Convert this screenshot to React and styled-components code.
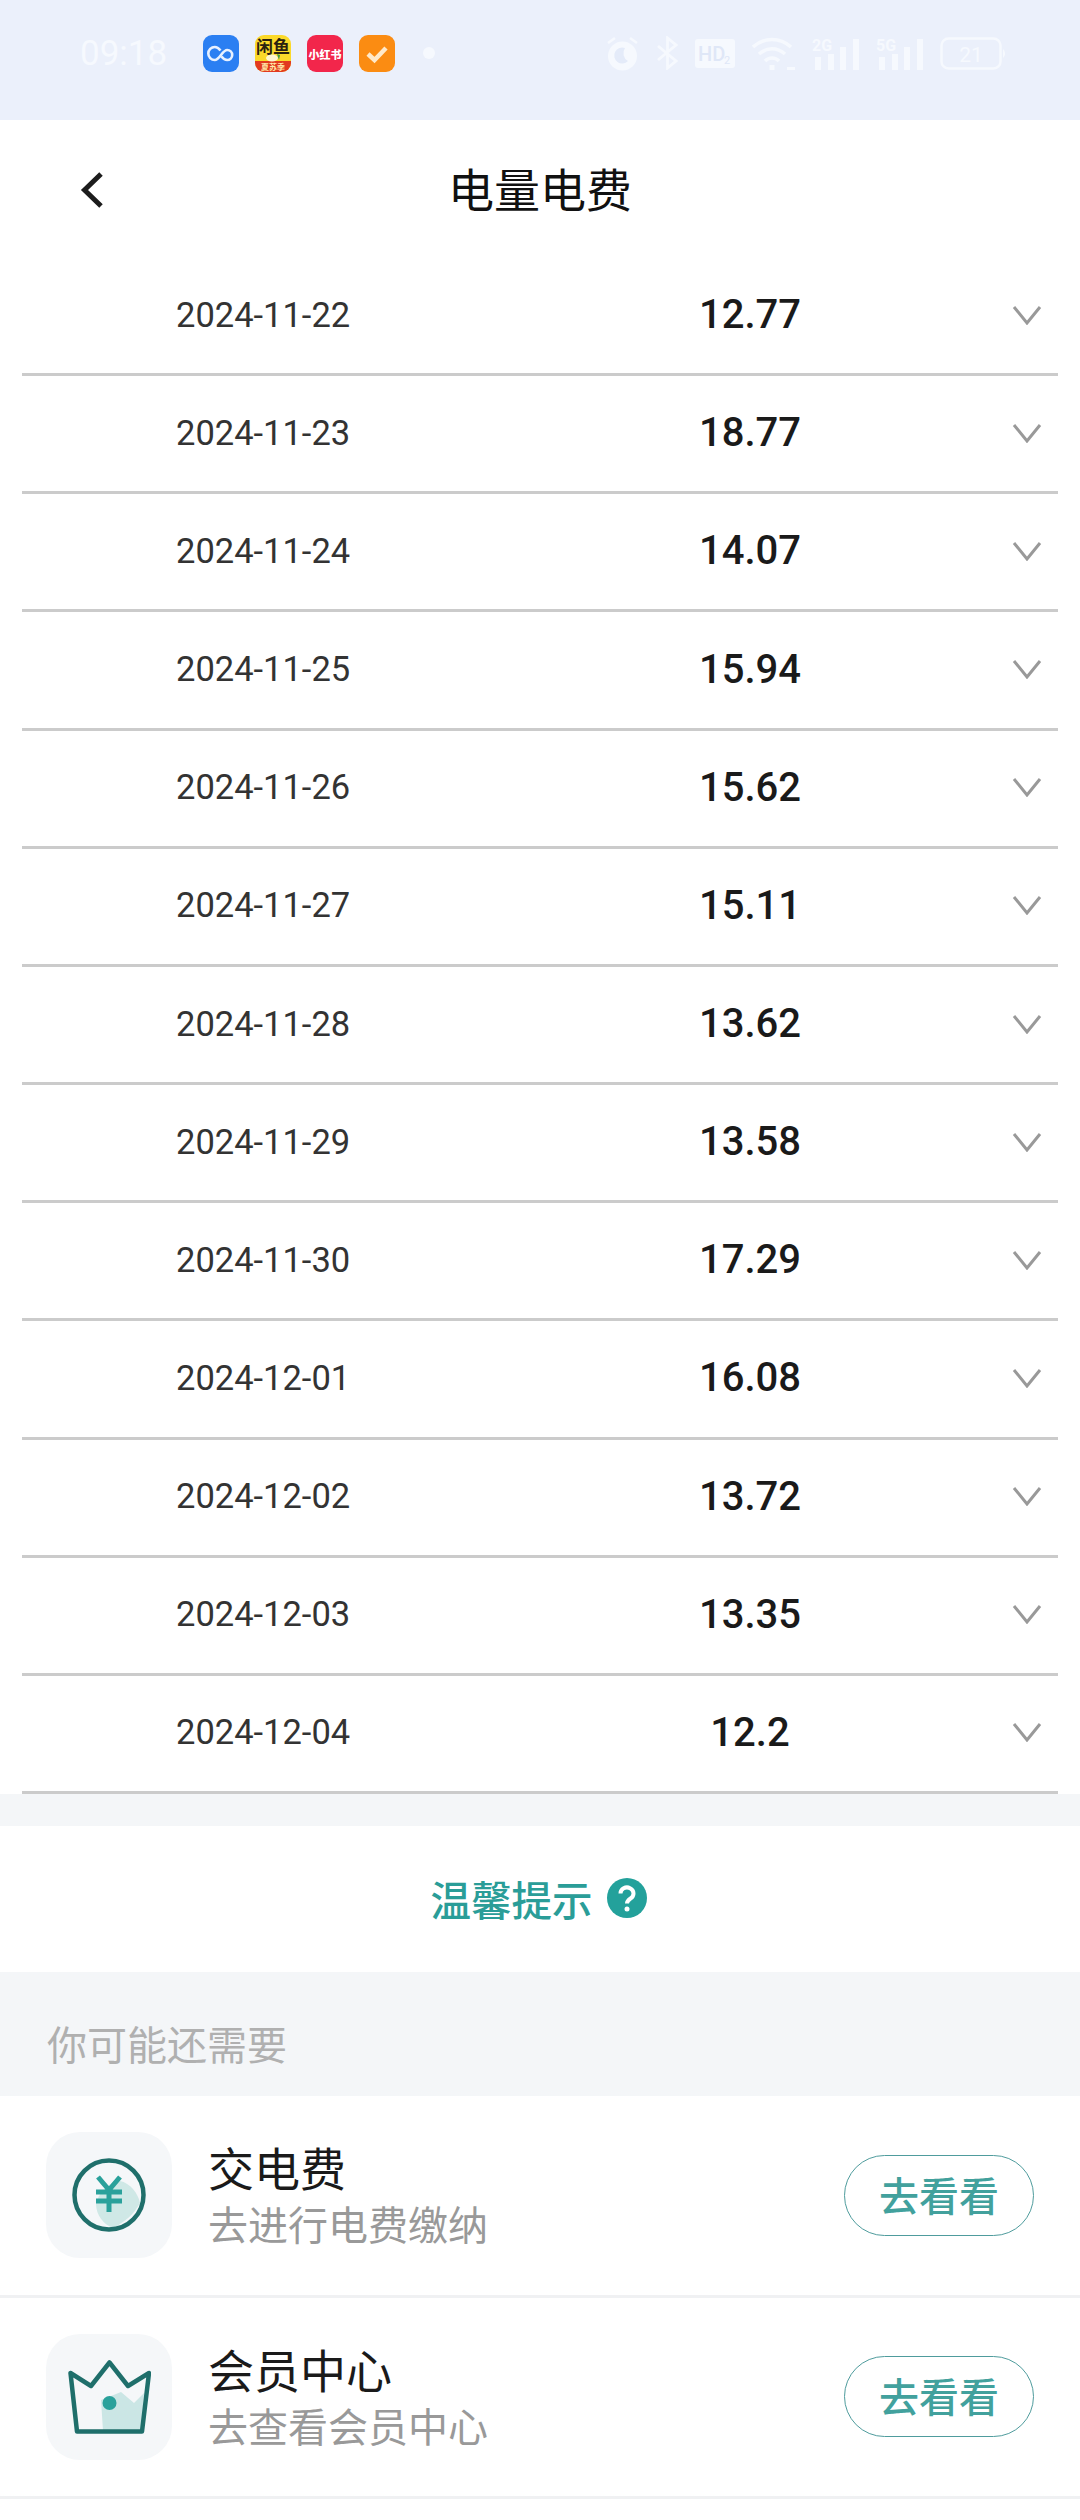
import styled, { createGlobalStyle } from 'styled-components'

const GlobalStyle = createGlobalStyle`
  html, body {
    margin: 0;
    padding: 0;
    background: #fff;
  }
  * {
    box-sizing: border-box;
  }
`

const records = [
  ['2024-11-22', '12.77'],
  ['2024-11-23', '18.77'],
  ['2024-11-24', '14.07'],
  ['2024-11-25', '15.94'],
  ['2024-11-26', '15.62'],
  ['2024-11-27', '15.11'],
  ['2024-11-28', '13.62'],
  ['2024-11-29', '13.58'],
  ['2024-11-30', '17.29'],
  ['2024-12-01', '16.08'],
  ['2024-12-02', '13.72'],
  ['2024-12-03', '13.35'],
  ['2024-12-04', '12.2'],
]

const BAR = '#f6f9fe'

const BlueApp = () => (
  <svg width="36" height="37" viewBox="0 0 36 37">
    <rect width="36" height="37" rx="9" fill="#2b7ff2" />
    <path
      d="M17.500 15.500c-1.800-2.300-3.600-3.500-5.700-3.500a6.500 6.500 0 0 0 0 13c4.800 0 7.600-10 12.400-10a5 5 0 0 1 0 10c-2.200 0-4-1.200-5.700-3.500"
      fill="none"
      stroke="#e8f1ff"
      strokeWidth="2.600"
    />
  </svg>
)

const FishApp = () => (
  <svg width="36" height="37" viewBox="0 0 36 37">
    <defs>
      <clipPath id="fishClip">
        <rect width="36" height="37" rx="9" />
      </clipPath>
    </defs>
    <g clipPath="url(#fishClip)">
      <rect width="36" height="37" fill="#fbd92a" />
      <rect y="26" width="36" height="11" fill="#e2391f" />
      <text x="18" y="18" textAnchor="middle" fontSize="17" fontWeight="700" fill="#2b2110" fontFamily="'Noto Sans CJK SC', sans-serif">闲鱼</text>
      <ellipse cx="17" cy="23" rx="6" ry="3.500" fill="#fff6cf" />
      <path d="M22 19l3 1-1 5z" fill="#3f9a45" />
      <text x="18" y="35" textAnchor="middle" fontSize="8" fontWeight="700" fill="#ffe9a8" fontFamily="'Noto Sans CJK SC', sans-serif">夏苏季</text>
    </g>
  </svg>
)

const RedApp = () => (
  <svg width="36" height="37" viewBox="0 0 36 37">
    <rect width="36" height="37" rx="9" fill="#f2264b" />
    <text x="18" y="23.500" textAnchor="middle" fontSize="11" fontWeight="900" fill="#fff" fontFamily="'Noto Sans CJK SC', sans-serif">小红书</text>
  </svg>
)

const CheckApp = () => (
  <svg width="36" height="37" viewBox="0 0 36 37">
    <rect width="36" height="37" rx="9" fill="#fb8c12" />
    <path d="M9 19l6.500 6L27 13" fill="none" stroke="#ffe9c9" strokeWidth="4.500" />
  </svg>
)

const AlarmIcon = () => (
  <svg width="33" height="35" viewBox="0 0 33 35" fill={BAR}>
    <circle cx="16.500" cy="20" r="14.500" />
    <path d="M2 7l7-5M31 7l-7-5" stroke={BAR} strokeWidth="2.500" />
    <path d="M19 12a8 8 0 1 0 3 13 9 9 0 0 1-3-13z" fill="#e4ebf9" />
  </svg>
)

const BluetoothIcon = () => (
  <svg width="22" height="34" viewBox="0 0 22 34" fill="none" stroke={BAR} strokeWidth="2.800">
    <path d="M2 10l18 15-8.500 7V2L20 9 2 24" />
  </svg>
)

const HdIcon = () => (
  <svg width="40" height="29" viewBox="0 0 40 29">
    <rect width="40" height="29" rx="3" fill={BAR} />
    <text x="3" y="22" fontSize="20" fontWeight="500" fill="#dfe7f7" fontFamily="Roboto, sans-serif">HD</text>
    <text x="29" y="25" fontSize="11" fill="#dfe7f7" fontFamily="Roboto, sans-serif">2</text>
  </svg>
)

const WifiIcon = () => (
  <svg width="43" height="33" viewBox="0 0 43 33" fill="none" stroke={BAR} strokeWidth="3.600">
    <path d="M1 10c11-10 27-10 38 0" />
    <path d="M7 17c8-7 18-7 26 0" />
    <path d="M13 24c4-4 10-4 14 0" />
    <rect x="17.500" y="28" width="5" height="5" fill={BAR} stroke="none" />
    <rect x="35" y="30" width="8" height="3" fill={BAR} stroke="none" />
  </svg>
)

const SignalIcon = ({ label }) => (
  <svg width="47" height="33" viewBox="0 0 47 33" fill={BAR}>
    <text x="0" y="14" fontSize="16" fontWeight="700" fontFamily="Roboto, sans-serif">{label}</text>
    <rect x="3" y="20" width="6" height="13" />
    <rect x="16" y="17" width="6" height="16" />
    <rect x="28" y="10" width="6" height="23" />
    <rect x="41" y="2" width="6" height="31" />
  </svg>
)

const BatteryIcon = () => (
  <svg width="65" height="33" viewBox="0 0 65 33">
    <rect x="1.500" y="1.500" width="59" height="30" rx="7" fill="none" stroke={BAR} strokeWidth="2.500" />
    <path d="M63 12a6 6 0 0 1 0 9z" fill={BAR} />
    <text x="31" y="25" textAnchor="middle" fontSize="21" fill={BAR} fontFamily="Roboto, sans-serif">21</text>
  </svg>
)

const BackIcon = () => (
  <svg width="24" height="36" viewBox="0 0 24 36" fill="none" stroke="#1c1c1c" strokeWidth="5">
    <path d="M21 2L4.500 18 21 34" />
  </svg>
)

const ChevronIcon = () => (
  <svg width="30" height="20" viewBox="0 0 30 20" fill="none" stroke="#999" strokeWidth="3">
    <path d="M2 2l13 16L28 2" />
  </svg>
)

const HelpIcon = () => (
  <svg width="40" height="40" viewBox="0 0 40 40">
    <circle cx="20" cy="20" r="20" fill="#23a19b" />
    <path d="M13.500 15.500a6.500 6 0 1 1 10 5c-2.200 1.500-3.500 2.500-3.500 5" fill="none" stroke="#fff" strokeWidth="4" />
    <circle cx="20" cy="31" r="2.500" fill="#fff" />
  </svg>
)

const YenIcon = () => (
  <svg width="74" height="74" viewBox="0 0 74 74">
    <path d="M24 46c2-10 12-22 24-23 10 2 18 12 20 22-6 11-15 19-27 25-9-3-17-13-17-24z" fill="#cfe8e6" />
    <circle cx="37" cy="37" r="34.500" fill="none" stroke="#1f6f6b" strokeWidth="4.500" />
    <path d="M26 19l11 13 11-13M37 32v22M24 34h26M24 43h26" fill="none" stroke="#2aa19b" strokeWidth="5" />
  </svg>
)

const CrownIcon = () => (
  <svg width="83" height="74" viewBox="0 0 83 74">
    <path d="M33 40l20-8 13 11 10-10-3 38H35z" fill="#cbe6e5" />
    <path
      d="M41.500 2.500L60 26l21-13-7 58.500H9L2.500 13 23 26z"
      fill="none"
      stroke="#1f6f6b"
      strokeWidth="4.500"
      strokeLinejoin="round"
    />
    <circle cx="41.500" cy="43" r="7" fill="#2aa19b" />
  </svg>
)

const services = [
  { title: '交电费', sub: '去进行电费缴纳', icon: <YenIcon /> },
  { title: '会员中心', sub: '去查看会员中心', icon: <CrownIcon /> },
]

const App = () => {
  return (
    <Page>
      <GlobalStyle />
      <StatusBar>
        <Time>09:18</Time>
        <AppIcons>
          <BlueApp />
          <FishApp />
          <RedApp />
          <CheckApp />
          <Dot />
        </AppIcons>
        <SystemIcons>
          <AlarmIcon />
          <BluetoothIcon />
          <HdIcon />
          <WifiIcon />
          <SignalIcon label="2G" />
          <SignalIcon label="5G" />
          <BatteryIcon />
        </SystemIcons>
      </StatusBar>

      <Header>
        <BackButton>
          <BackIcon />
        </BackButton>
        <Title>电量电费</Title>
      </Header>

      <List>
        {records.map(([date, value]) => (
          <Row key={date}>
            <DateText>{date}</DateText>
            <Value>{value}</Value>
            <RowArrow>
              <ChevronIcon />
            </RowArrow>
          </Row>
        ))}
      </List>

      <Gap />

      <Tips>
        <TipsText>温馨提示</TipsText>
        <HelpIcon />
      </Tips>

      <SectionLabel>你可能还需要</SectionLabel>

      {services.map((item) => (
        <ServiceRow key={item.title}>
          <IconTile>{item.icon}</IconTile>
          <ServiceText>
            <ServiceTitle>{item.title}</ServiceTitle>
            <ServiceSub>{item.sub}</ServiceSub>
          </ServiceText>
          <GoButton type="button">去看看</GoButton>
        </ServiceRow>
      ))}
    </Page>
  )
}
export default App

const Page = styled.div`
  width: 1080px;
  min-height: 2520px;
  background: #fff;
  font-family: Roboto, 'Noto Sans CJK SC', sans-serif;
`

const StatusBar = styled.div`
  height: 120px;
  padding: 0 75px 14px 80px;
  background: #ebf0fb;
  display: flex;
  align-items: center;
`

const Time = styled.span`
  flex-shrink: 0;
  padding-right: 4px;
  font-size: 35px;
  white-space: nowrap;
  color: ${BAR};
`

const AppIcons = styled.div`
  margin-left: 32px;
  display: flex;
  align-items: center;
  gap: 16px;
`

const Dot = styled.span`
  width: 12px;
  height: 12px;
  margin-left: 12px;
  border-radius: 50%;
  background: ${BAR};
`

const SystemIcons = styled.div`
  margin-left: auto;
  display: flex;
  align-items: center;
  gap: 17px;
`

const Header = styled.header`
  height: 138px;
  display: grid;
  grid-template-columns: 1fr auto 1fr;
  align-items: center;
`

const BackButton = styled.div`
  padding-left: 80px;
  display: flex;
  margin-top: 1px;
`

const Title = styled.h1`
  margin: 0 0 4px;
  font-size: 46px;
  font-weight: 400;
  color: #111;
`

const List = styled.div`
  padding: 0 22px;
`

const Row = styled.div`
  height: 118.17px;
  padding-bottom: 2px;
  border-bottom: 3px solid #cbcbcb;
  display: grid;
  grid-template-columns: 154px 440px 268px 1fr;
  grid-template-areas: '. date value arrow';
  align-items: center;
`

const DateText = styled.span`
  grid-area: date;
  font-size: 34.500px;
  color: #333;
`

const Value = styled.span`
  grid-area: value;
  text-align: center;
  font-size: 40px;
  font-weight: 500;
  color: #1a1a1a;
`

const RowArrow = styled.span`
  grid-area: arrow;
  justify-self: end;
  padding-right: 16px;
  display: flex;
`

const Gap = styled.div`
  height: 32px;
  background: #f4f6f8;
`

const Tips = styled.div`
  height: 146px;
  padding: 0 3px 2px 0;
  display: flex;
  align-items: center;
  justify-content: center;
  gap: 14px;
`

const TipsText = styled.span`
  font-size: 40.500px;
  font-weight: 500;
  color: #2a9d98;
`

const SectionLabel = styled.div`
  height: 124px;
  padding: 18px 0 0 47px;
  display: flex;
  align-items: center;
  background: #f4f6f8;
  font-size: 40px;
  color: #b0b0b0;
`

const ServiceRow = styled.div`
  height: 201.500px;
  padding: 0 46px;
  display: flex;
  align-items: center;
  border-bottom: 3px solid #f0f1f3;
`

const IconTile = styled.div`
  width: 126px;
  height: 126px;
  border-radius: 34px;
  background: #f5f7f9;
  display: flex;
  align-items: center;
  justify-content: center;
`

const ServiceText = styled.div`
  margin-left: 36px;
  padding-top: 6px;
  display: flex;
  flex-direction: column;
`

const ServiceTitle = styled.span`
  font-size: 46px;
  line-height: 58px;
  color: #1a1a1a;
`

const ServiceSub = styled.span`
  font-size: 40px;
  line-height: 56px;
  color: #999;
`

const GoButton = styled.button`
  margin-left: auto;
  width: 190px;
  height: 81px;
  padding: 0 0 3px;
  border: 1.500px solid #4f9c9d;
  border-radius: 41px;
  background: #fff;
  font-family: inherit;
  font-size: 40px;
  font-weight: 500;
  color: #42a19d;
`
